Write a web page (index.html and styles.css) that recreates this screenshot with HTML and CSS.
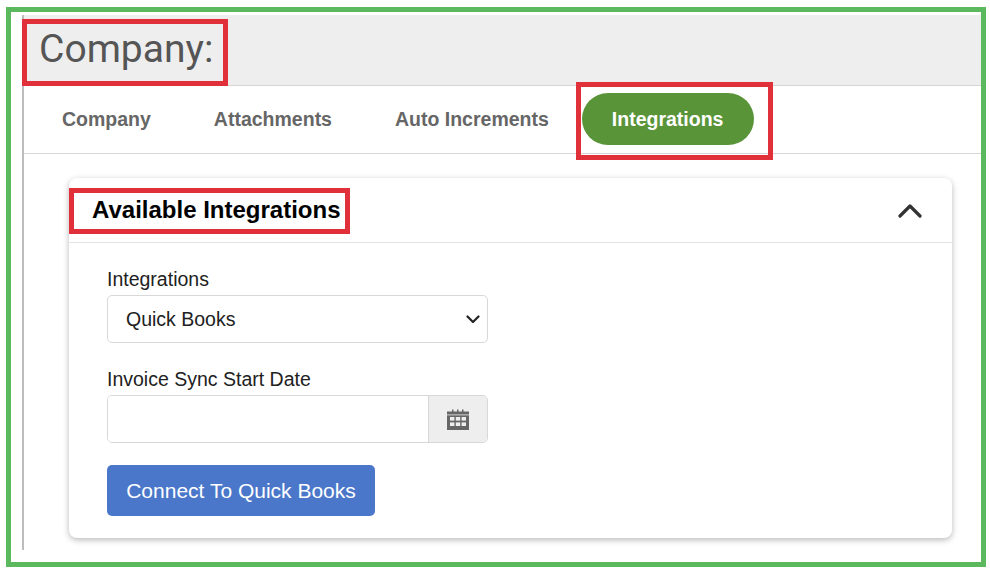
FILE: index.html
```html
<!DOCTYPE html>
<html lang="en">
<head>
    <meta charset="UTF-8">
    <meta name="viewport" content="width=device-width, initial-scale=1.0">
    <title>Company Integrations</title>
    <link rel="stylesheet" href="styles.css">
</head>
<body>

<div class="frame">
    <div class="page">
        <div class="page-title">
            <h1>Company:</h1>
        </div>

        <!-- Tabs -->
        <nav class="tabs">
            <a class="tab">Company</a>
            <a class="tab">Attachments</a>
            <a class="tab">Auto Increments</a>
            <a class="tab tab-active">Integrations</a>
        </nav>

        <section class="card">
            <div class="card-head">
                <h2>Available Integrations</h2>
                <svg class="collapse-icon" width="24" height="15" viewBox="0 0 24 15">
                    <path d="M2 13 L12 3 L22 13" fill="none" stroke="#333" stroke-width="3.2" stroke-linecap="round" stroke-linejoin="round"/>
                </svg>
            </div>
            <div class="card-body">
                <label class="field-label" for="integration">Integrations</label>
                <div class="select-wrap">
                    <select id="integration" class="field-select">
                        <option>Quick Books</option>
                    </select>
                    <svg class="select-arrow" width="14" height="9" viewBox="0 0 14 9">
                        <path d="M1.5 1.5 L7 7 L12.5 1.5" fill="none" stroke="#222" stroke-width="2.2" stroke-linecap="round" stroke-linejoin="round"/>
                    </svg>
                </div>

                <label class="field-label" for="syncDate">Invoice Sync Start Date</label>
                <div class="date-group">
                    <input type="text" id="syncDate" class="date-input">
                    <span class="date-addon">
                        <svg width="22" height="21" viewBox="0 0 22 21">
                            <path fill="#666" d="M5 0.500h1.500v2H10V0.500h1.500v2H15V0.500h1.500v2H22V21H0V2.500h5z"/>
                            <g fill="#eee">
                                <rect x="0" y="5.500" width="22" height="0.800"/>
                                <rect x="3" y="8" width="4.400" height="3.600"/>
                                <rect x="8.800" y="8" width="4.400" height="3.600"/>
                                <rect x="14.600" y="8" width="4.400" height="3.600"/>
                                <rect x="3" y="13.400" width="4.400" height="3.600"/>
                                <rect x="8.800" y="13.400" width="4.400" height="3.600"/>
                                <rect x="14.600" y="13.400" width="4.400" height="3.600"/>
                            </g>
                        </svg>
                    </span>
                </div>

                <button class="connect-btn">Connect To Quick Books</button>
            </div>
        </section>
    </div>

    <!-- Red annotation boxes -->
    <div class="mark mark-title"></div>
    <div class="mark mark-tab"></div>
    <div class="mark mark-heading"></div>
</div>

</body>
</html>
```

FILE: styles.css
```css
* {
    box-sizing: border-box;
}

body {
    margin: 0;
    background-color: #ffffff;
    font-family: "Liberation Sans", Arial, sans-serif;
    color: #212121;
}

.frame {
    position: relative;
    width: 980px;
    height: 560px;
    margin: 7px 0 0 6px;
    padding: 3px 0 0 11px;
    border: 5px solid #5cb85c;
}

.page {
    height: 535px;
    border-left: 2px solid #bdbdbd;
}

.page-title {
    height: 71px;
    padding-left: 15px;
    background-color: #eeeeee;
    border-bottom: 1px solid #d6d6d6;
}

.page-title h1 {
    margin: 0;
    font-family: Roboto, sans-serif;
    font-size: 39px;
    font-weight: 400;
    line-height: 69px;
    color: #555555;
}

.tabs {
    display: flex;
    align-items: center;
    gap: 3px;
    height: 68px;
    padding: 0 0 2px 8px;
    border-bottom: 1px solid #d6d6d6;
}

.tab {
    padding: 0 30px;
    font-size: 19.500px;
    font-weight: bold;
    line-height: 52px;
    color: #666666;
}

.tab-active {
    padding-right: 31px;
    background-color: #5a9439;
    border-radius: 26px;
    color: #ffffff;
}

.card {
    width: 883px;
    height: 360px;
    margin: 24px 0 0 45px;
    background-color: #ffffff;
    border-radius: 8px;
    box-shadow: 0 2px 6px rgba(0, 0, 0, 0.28);
}

.card-head {
    display: flex;
    align-items: center;
    justify-content: space-between;
    height: 65px;
    padding: 0 30px 0 23px;
    border-bottom: 1px solid #e3e3e3;
}

.card-head h2 {
    margin: 0;
    font-size: 24px;
    font-weight: bold;
    color: #000000;
}

.card-body {
    padding: 24px 38px;
}

.field-label {
    display: block;
    height: 28px;
    font-size: 19.500px;
    line-height: 24px;
}

.select-wrap {
    position: relative;
    width: 381px;
    margin-bottom: 24px;
}

.field-select {
    display: block;
    width: 100%;
    height: 48px;
    padding: 0 18px;
    appearance: none;
    background-color: #ffffff;
    border: 1px solid #d8d8d8;
    border-radius: 5px;
    font-family: inherit;
    font-size: 19.500px;
    color: #212121;
}

.select-arrow {
    position: absolute;
    top: 20px;
    right: 8px;
}

.date-group {
    display: flex;
    width: 381px;
    height: 48px;
    border: 1px solid #d8d8d8;
    border-radius: 5px;
    overflow: hidden;
}

.date-input {
    flex: 1;
    min-width: 0;
    border: none;
    outline: none;
}

.date-addon {
    display: flex;
    align-items: center;
    justify-content: center;
    width: 59px;
    background-color: #eeeeee;
    border-left: 1px solid #d8d8d8;
}

.connect-btn {
    display: block;
    width: 268px;
    height: 51px;
    margin-top: 22px;
    padding: 0;
    background-color: #4a77c9;
    border: none;
    border-radius: 5px;
    font-family: inherit;
    font-size: 21px;
    color: #ffffff;
}

.mark {
    position: absolute;
    border: 5px solid #e0303a;
}

.mark-title {
    left: 11px;
    top: 7px;
    width: 206px;
    height: 67px;
}

.mark-tab {
    left: 565px;
    top: 70px;
    width: 197px;
    height: 78px;
}

.mark-heading {
    left: 58px;
    top: 176px;
    width: 281px;
    height: 46px;
}
```
